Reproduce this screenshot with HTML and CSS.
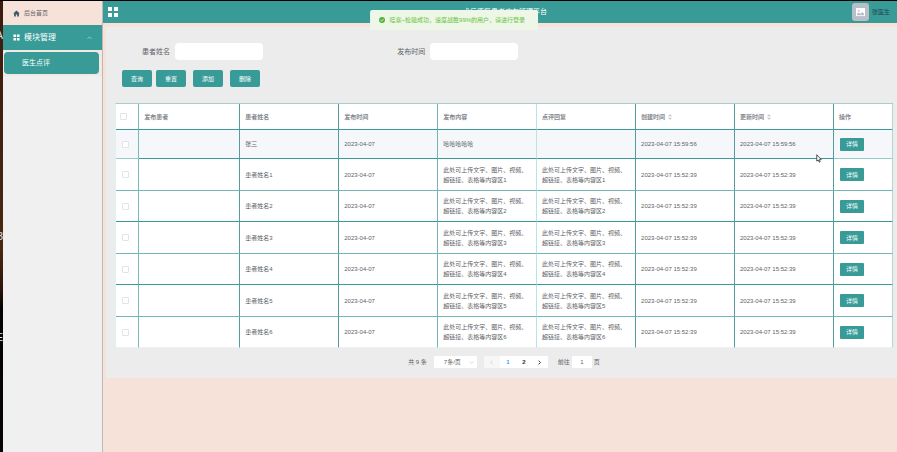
FILE: index.html
```html
<!DOCTYPE html>
<html lang="zh-CN">
<head>
<meta charset="utf-8">
<title>医生点评</title>
<meta name="viewport" content="width=device-width, initial-scale=1">
<link rel="stylesheet" href="styles.css">
</head>
<body>
<div class="desktop" aria-hidden="true"><span class="peek peek-a">A</span><span class="peek peek-b">3</span><span class="peek peek-c">E</span></div>
<aside class="sidebar">
  <a class="home" href="#"><svg class="icon" viewBox="0 0 16 16"><path fill="#3d5a66" d="M8 1 0.5 8H2.500V15H6.500V10.500H9.500V15H13.500V8H15.500Z"/></svg>后台首页</a>
  <button class="group" type="button"><svg class="icon" viewBox="0 0 16 16"><path fill="#fff" d="M1 1h6v6H1zM9 1h6v6H9zM1 9h6v6H1zM9 9h6v6H9z"/></svg><span>模块管理</span><svg class="chevron" viewBox="0 0 8 8"><path d="M1 6 4 3 7 6" fill="none" stroke="#d9efed"/></svg></button>
  <nav class="submenu"><a href="#">医生点评</a></nav>
</aside>
<div class="app">
  <header class="topbar">
    <button class="toggle" type="button" aria-label="菜单"><svg viewBox="0 0 10 10"><path fill="#fff" d="M0 0h4v4H0zM6 0h4v4H6zM0 6h4v4H0zM6 6h4v4H6z"/></svg></button>
    <h1>术后康复患者病友管理平台</h1>
    <div class="user"><span class="avatar"><svg viewBox="0 0 10 10"><path fill="#fff" d="M0 0h10v9H0z"/><circle cx="3" cy="3" r="1" fill="#b9bfc9"/><path fill="#b9bfc9" d="M1 8V6.500L3 5l2 1.500L7 4.500 9 6.500V8Z"/></svg></span><span>张医生</span></div>
  </header>
  <main class="panel">
    <form class="search">
      <div class="field"><label for="name">患者姓名</label><input id="name" type="text"></div>
      <div class="field"><label for="date">发布时间</label><input id="date" type="text"></div>
    </form>
    <div class="actions">
      <button class="btn" type="button">查询</button><button class="btn" type="button">重置</button>
      <button class="btn wide-gap" type="button">添加</button><button class="btn wide-gap" type="button">删除</button>
    </div>
    <table>
      <colgroup><col class="c-check"><col class="c-owner"><col><col><col><col><col><col><col class="c-op"></colgroup>
      <thead><tr><th><input type="checkbox" aria-label="全选"></th><th>发布患者</th><th>患者姓名</th><th>发布时间</th><th>发布内容</th><th>点评回复</th>
        <th>创建时间<svg class="sort" viewBox="0 0 6 8"><path fill="#c0c4cc" d="M0 3 3 0 6 3ZM0 5 3 8 6 5Z"/></svg></th>
        <th>更新时间<svg class="sort" viewBox="0 0 6 8"><path fill="#c0c4cc" d="M0 3 3 0 6 3ZM0 5 3 8 6 5Z"/></svg></th><th>操作</th></tr></thead>
      <tbody>
        <tr class="hover"><td><input type="checkbox" aria-label="选择"></td><td></td><td>张三</td><td>2023-04-07</td><td>哈哈哈哈哈</td><td></td><td>2023-04-07 15:59:56</td><td>2023-04-07 15:59:56</td><td><button class="detail" type="button">详情</button></td></tr>
        <tr><td><input type="checkbox" aria-label="选择"></td><td></td><td>患者姓名1</td><td>2023-04-07</td><td>此处可上传文字、图片、视频、<br>超链接、表格等内容区1</td><td>此处可上传文字、图片、视频、<br>超链接、表格等内容区1</td><td>2023-04-07 15:52:39</td><td>2023-04-07 15:52:39</td><td><button class="detail" type="button">详情</button></td></tr>
        <tr><td><input type="checkbox" aria-label="选择"></td><td></td><td>患者姓名2</td><td>2023-04-07</td><td>此处可上传文字、图片、视频、<br>超链接、表格等内容区2</td><td>此处可上传文字、图片、视频、<br>超链接、表格等内容区2</td><td>2023-04-07 15:52:39</td><td>2023-04-07 15:52:39</td><td><button class="detail" type="button">详情</button></td></tr>
        <tr><td><input type="checkbox" aria-label="选择"></td><td></td><td>患者姓名3</td><td>2023-04-07</td><td>此处可上传文字、图片、视频、<br>超链接、表格等内容区3</td><td>此处可上传文字、图片、视频、<br>超链接、表格等内容区3</td><td>2023-04-07 15:52:39</td><td>2023-04-07 15:52:39</td><td><button class="detail" type="button">详情</button></td></tr>
        <tr><td><input type="checkbox" aria-label="选择"></td><td></td><td>患者姓名4</td><td>2023-04-07</td><td>此处可上传文字、图片、视频、<br>超链接、表格等内容区4</td><td>此处可上传文字、图片、视频、<br>超链接、表格等内容区4</td><td>2023-04-07 15:52:39</td><td>2023-04-07 15:52:39</td><td><button class="detail" type="button">详情</button></td></tr>
        <tr><td><input type="checkbox" aria-label="选择"></td><td></td><td>患者姓名5</td><td>2023-04-07</td><td>此处可上传文字、图片、视频、<br>超链接、表格等内容区5</td><td>此处可上传文字、图片、视频、<br>超链接、表格等内容区5</td><td>2023-04-07 15:52:39</td><td>2023-04-07 15:52:39</td><td><button class="detail" type="button">详情</button></td></tr>
        <tr><td><input type="checkbox" aria-label="选择"></td><td></td><td>患者姓名6</td><td>2023-04-07</td><td>此处可上传文字、图片、视频、<br>超链接、表格等内容区6</td><td>此处可上传文字、图片、视频、<br>超链接、表格等内容区6</td><td>2023-04-07 15:52:39</td><td>2023-04-07 15:52:39</td><td><button class="detail" type="button">详情</button></td></tr>
      </tbody>
    </table>
    <div class="pagination">
      <span>共 9 条</span>
      <div class="size"><select aria-label="每页条数"><option>7条/页</option></select><svg viewBox="0 0 8 8"><path d="M1 2.500 4 5.500 7 2.500" fill="none" stroke="#c0c4cc"/></svg></div>
      <div class="pager">
        <button type="button" disabled aria-label="上一页"><svg viewBox="0 0 8 8"><path d="M5.500 1 2.500 4 5.500 7" fill="none" stroke="#c0c4cc"/></svg></button><button type="button" class="current">1</button><button type="button">2</button><button type="button" aria-label="下一页"><svg viewBox="0 0 8 8"><path d="M2.500 1 5.500 4 2.500 7" fill="none" stroke="#303133" stroke-width="1.500"/></svg></button>
      </div>
      <div class="jump"><label for="page">前往</label><input id="page" type="text" value="1"><span>页</span></div>
    </div>
  </main>
</div>
<div class="toast" role="alert"><svg viewBox="0 0 14 14"><circle cx="7" cy="7" r="7" fill="#56b13a"/><path d="M3.500 7 6 9.500 10.500 5" fill="none" stroke="#fff" stroke-width="1.800"/></svg>哇塞~检验成功，速度战胜99%的用户，请进行登录</div>
<svg class="cursor" viewBox="0 0 8 12" aria-hidden="true"><path d="M1 1V9.500L3 8 4.500 11 5.500 10.500 4.500 7.500H7Z" fill="#fff" stroke="#222"/></svg>
</body>
</html>
```

FILE: styles.css
```css
* { box-sizing: border-box; }

:root {
  --teal: #389b98;
  --pink: #f7e2da;
  --cyan: #b5e6e3;
}

body {
  margin: 0;
  min-height: 100vh;
  display: flex;
  border-top: 1px solid #000;
  background: var(--pink);
  color: #606266;
  font: 6px/10px "Liberation Sans", "Noto Sans CJK SC", sans-serif;
}

button, input, select { font: inherit; color: inherit; margin: 0; padding: 0; border: 0; }
a { color: inherit; text-decoration: none; }
svg { display: block; flex: none; }

.desktop {
  position: relative;
  flex: none;
  width: 3px;
  overflow: hidden;
  background: linear-gradient(#3a1b0e, #4b2712 55%, #2b150b 64%, #050202 68%, #0a0505);
}
.peek { position: absolute; right: 0; color: #d4e4f4; font-size: 11px; line-height: 12px; }
.peek-a { top: 28px; }
.peek-b { top: 229px; }
.peek-c { top: 330px; }

.sidebar { flex: none; width: 100px; background: #f0f0f0; border-right: 1px solid #b9b9b9; }
.home, .group { display: flex; align-items: center; gap: 4px; width: 100%; padding: 0 10px; }
.home { height: 24px; background: var(--pink); }
.group { height: 25px; background: var(--teal); color: #fff; font-size: 8px; text-align: left; }
.icon { width: 7px; height: 7px; }
.chevron { width: 5px; height: 5px; margin-left: auto; }
.submenu { padding: 2px 3px 2px 1px; background: #f3e9e3; }
.submenu a {
  display: block;
  padding-left: 18px;
  border-radius: 4px;
  background: var(--teal);
  color: #fff;
  font-size: 7px;
  line-height: 22px;
}

.app { flex: 1; min-width: 0; }
.topbar {
  display: grid;
  grid-template-columns: 1fr auto 1fr;
  align-items: center;
  height: 22px;
  padding: 0 7px 0 5px;
  background: var(--teal);
}
.toggle { width: 10px; height: 10px; background: none; }
.topbar h1 { margin: 0; padding-left: 12px; color: #fff; font-size: 7px; font-weight: 400; }
.user { display: flex; align-items: center; justify-content: flex-end; gap: 3px; color: #24464a; }
.avatar { display: grid; place-items: center; width: 17px; height: 18px; border-radius: 3px; background: #b9bfc9; }
.avatar svg { width: 9px; height: 9px; }

.panel { margin: 4px 0 0 3px; padding: 16px 4px 10px 9px; background: #ececec; }
.search { display: flex; padding-left: 27px; font-size: 7px; }
.field { display: flex; align-items: center; gap: 5px; width: 34%; }
.field input { width: 88px; height: 17px; border-radius: 4px; background: #fff; }
.actions { display: flex; gap: 4px; margin: 10px 0 16px; padding-left: 7px; }
.btn { width: 30px; height: 17px; border-radius: 2px; background: var(--teal); color: #fff; }
.wide-gap { margin-left: 3px; }

table {
  width: 100%;
  table-layout: fixed;
  border-collapse: separate;
  border-spacing: 0;
  border-top: 1px solid #a3cfcd;
  border-left: 1px solid #d5f4f2;
  background: #fff;
}
.c-check { width: 3%; }
.c-owner { width: 13%; }
.c-op { width: 59px; }
th, td { height: 31px; padding: 0 5px; border-right: 1px solid #549d9a; border-bottom: 1px solid var(--teal); text-align: left; }
th { height: 26px; color: #85888e; }
tr:nth-child(even) td { height: 32px; border-bottom-color: #72b7b3; }
tbody tr.hover td { height: 29px; background: #f5f7fa; }
th:first-child, td:first-child { border-right-color: #78bcb9; }
th:nth-child(4), td:nth-child(4) { border-right-color: #72b7b3; }
th:nth-child(5), td:nth-child(5) { border-right-color: var(--cyan); }
th:last-child, td:last-child { border-right-color: #b2d6d4; }
.hover td:first-child, .hover td:last-child { border-bottom-color: #92cfcc; }
tbody tr:last-child td { border-bottom-color: #eef0f2; }
th:first-child { padding-left: 4px; }
td:first-child { padding-left: 6px; }
td:last-child { padding-left: 6px; }
input[type="checkbox"] { appearance: none; display: block; width: 7px; height: 7px; border: 1px solid #e2e4e8; border-radius: 1px; background: #fff; }
.sort { display: inline-block; width: 4px; height: 6px; margin-left: 3px; vertical-align: middle; }
.detail { display: block; width: 24px; height: 13px; border-radius: 1px; background: var(--teal); color: #fff; }

.pagination { display: flex; align-items: center; justify-content: center; gap: 7px; margin-top: 8px; }
.size { position: relative; }
.size select { appearance: none; display: block; width: 43px; height: 12px; padding: 0 10px; border-radius: 1px; background: #fff; }
.size svg { position: absolute; right: 3px; top: 4px; width: 5px; height: 5px; }
.pager { display: flex; border-radius: 1px; overflow: hidden; }
.pager button { display: grid; place-items: center; width: 16px; height: 12px; background: #fff; color: #303133; font-weight: 700; }
.pager button:disabled { background: #f7f7f7; }
.pager svg { width: 5px; height: 5px; }
.pager .current { color: #409eff; }
.jump { display: flex; align-items: center; gap: 2px; padding-left: 3px; }
.jump input { width: 20px; height: 12px; border-radius: 1px; background: #fff; text-align: center; }

.toast {
  position: absolute;
  top: 10px;
  left: 50%;
  transform: translateX(-47%);
  display: flex;
  align-items: center;
  gap: 5px;
  width: 168px;
  height: 20px;
  padding-left: 9px;
  border-radius: 2px;
  background: #edf6e7;
  color: #67c23a;
  white-space: nowrap;
}
.toast svg { width: 6px; height: 6px; }
.cursor { position: absolute; left: 816px; top: 154px; width: 6px; height: 9px; }
```
